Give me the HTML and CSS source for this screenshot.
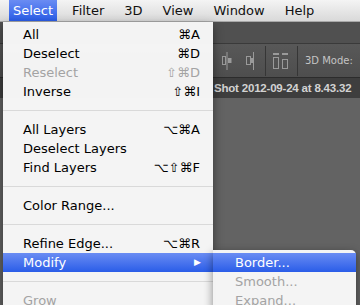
FILE: index.html
```html
<!DOCTYPE html>
<html lang="en">
<head>
    <meta charset="UTF-8">
    <title>Select menu</title>
    <link rel="stylesheet" href="styles.css">
</head>
<body>
    <div class="menubar">
        <span class="mb-item active">Select</span>
        <span class="mb-item">Filter</span>
        <span class="mb-item">3D</span>
        <span class="mb-item">View</span>
        <span class="mb-item">Window</span>
        <span class="mb-item">Help</span>
    </div>

    <div class="app">
        <div class="strip"></div>
        <div class="toolbar">
            <svg class="tool" width="12" height="18" viewBox="0 0 12 18">
                <path d="M6 0v18" stroke="#9a9a9a" stroke-width="1"/>
                <rect x="1.5" y="4.5" width="3" height="8" fill="none" stroke="#9a9a9a"/>
                <rect x="7" y="6" width="3.5" height="5" fill="#9a9a9a"/>
            </svg>
            <svg class="tool" width="12" height="18" viewBox="0 0 12 18">
                <path d="M8.5 0v18" stroke="#9a9a9a" stroke-width="1"/>
                <rect x="1.5" y="4.5" width="4" height="8" fill="none" stroke="#9a9a9a"/>
                <rect x="5" y="6" width="3" height="5" fill="#9a9a9a"/>
            </svg>
            <span class="tb-sep"></span>
            <svg class="tool" width="16" height="18" viewBox="0 0 16 18">
                <rect x="0" y="1" width="6" height="2" fill="#9a9a9a"/>
                <rect x="9" y="1" width="6" height="2" fill="#9a9a9a"/>
                <rect x="0.5" y="5.5" width="5" height="11" fill="none" stroke="#9a9a9a"/>
                <rect x="9.5" y="7.5" width="5" height="9" fill="none" stroke="#9a9a9a"/>
            </svg>
            <span class="tb-sep"></span>
            <span class="tb-label">3D Mode:</span>
        </div>
        <div class="doctab">Shot 2012-09-24 at 8.43.32</div>
        <div class="canvas"></div>
    </div>

    <div class="menu">
        <div class="row"><span>All</span><span class="key">⌘A</span></div>
        <div class="row"><span>Deselect</span><span class="key">⌘D</span></div>
        <div class="row disabled"><span>Reselect</span><span class="key">⇧⌘D</span></div>
        <div class="row"><span>Inverse</span><span class="key">⇧⌘I</span></div>
        <div class="sep"></div>
        <div class="row"><span>All Layers</span><span class="key">⌥⌘A</span></div>
        <div class="row"><span>Deselect Layers</span></div>
        <div class="row"><span>Find Layers</span><span class="key">⌥⇧⌘F</span></div>
        <div class="sep"></div>
        <div class="row"><span>Color Range...</span></div>
        <div class="sep"></div>
        <div class="row"><span>Refine Edge...</span><span class="key">⌥⌘R</span></div>
        <div class="row selected"><span>Modify</span><span class="arrow">▶</span></div>
        <div class="sep"></div>
        <div class="row disabled"><span>Grow</span></div>
    </div>

    <div class="submenu">
        <div class="row selected"><span>Border...</span></div>
        <div class="row disabled"><span>Smooth...</span></div>
        <div class="row disabled"><span>Expand...</span></div>
    </div>
</body>
</html>
```

FILE: styles.css
```css
* {
    margin: 0;
    padding: 0;
    box-sizing: border-box;
}

html,
body {
    width: 360px;
    height: 305px;
    overflow: hidden;
}

body {
    position: relative;
    font: 13px/1 "DejaVu Sans", "Liberation Sans", sans-serif;
    background: #626262;
}

/* top menu bar */
.menubar {
    height: 22px;
    display: flex;
    align-items: stretch;
    padding-left: 4px;
    background: linear-gradient(#f4f4f4, #d9d9d9);
    border-bottom: 1px solid #a8a8a8;
    color: #111;
}

.mb-item {
    display: flex;
    align-items: center;
    padding: 0 10px;
}

.mb-item.active {
    padding: 0 4px;
    margin: 0 5px;
    color: #fff;
    background: linear-gradient(#6a8cf3, #2a5de8);
}

/* photoshop window behind */
.app {
    display: flex;
    flex-direction: column;
    height: 283px;
}

.strip {
    height: 22px;
    background: #505050;
    border-bottom: 1px solid #3a3a3a;
}

.toolbar {
    height: 34px;
    display: flex;
    align-items: center;
    padding-left: 221px;
    background: linear-gradient(#585858, #4e4e4e);
    border-bottom: 1px solid #2c2c2c;
}

.tool {
    margin-right: 12px;
}

.tb-sep {
    width: 1px;
    height: 30px;
    background: #363636;
    margin: 0 7px 0 -4px;
}

.tb-label {
    font-size: 10px;
    color: #c4c4c4;
}

.doctab {
    height: 20px;
    display: flex;
    align-items: center;
    padding-left: 214px;
    background: #3e3e3e;
    color: #d2d2d2;
    font: bold 11.5px "Liberation Sans", sans-serif;
    letter-spacing: -0.2px;
    white-space: nowrap;
}

.canvas {
    flex: 1;
    background: #636363;
}

/* dropdown menu */
.menu {
    position: absolute;
    left: 3px;
    top: 22px;
    width: 210px;
    padding-top: 3px;
    background: rgba(247, 247, 247, 0.98);
    box-shadow: 0 4px 10px rgba(0, 0, 0, 0.45);
    color: #000;
}

.row {
    height: 19px;
    display: flex;
    align-items: center;
    justify-content: space-between;
    padding: 0 13px 0 20px;
    white-space: nowrap;
}

.row.disabled {
    color: #a3a3a3;
}

.row.selected {
    color: #fff;
    background: linear-gradient(#6a8cf3, #2a5de8);
}

.key {
    font-size: 13px;
}

.arrow {
    font-size: 9px;
    margin-right: -1px;
}

.sep {
    height: 19px;
    display: flex;
    align-items: center;
}

.sep::after {
    content: "";
    flex: 1;
    height: 1px;
    background: #d9d9d9;
}

.submenu {
    position: absolute;
    left: 213px;
    top: 250px;
    width: 143px;
    padding-top: 3px;
    background: rgba(247, 247, 247, 0.98);
    border-radius: 0 5px 0 0;
    box-shadow: 0 3px 10px rgba(0, 0, 0, 0.45);
}

.submenu .row {
    padding-left: 22px;
}
```
